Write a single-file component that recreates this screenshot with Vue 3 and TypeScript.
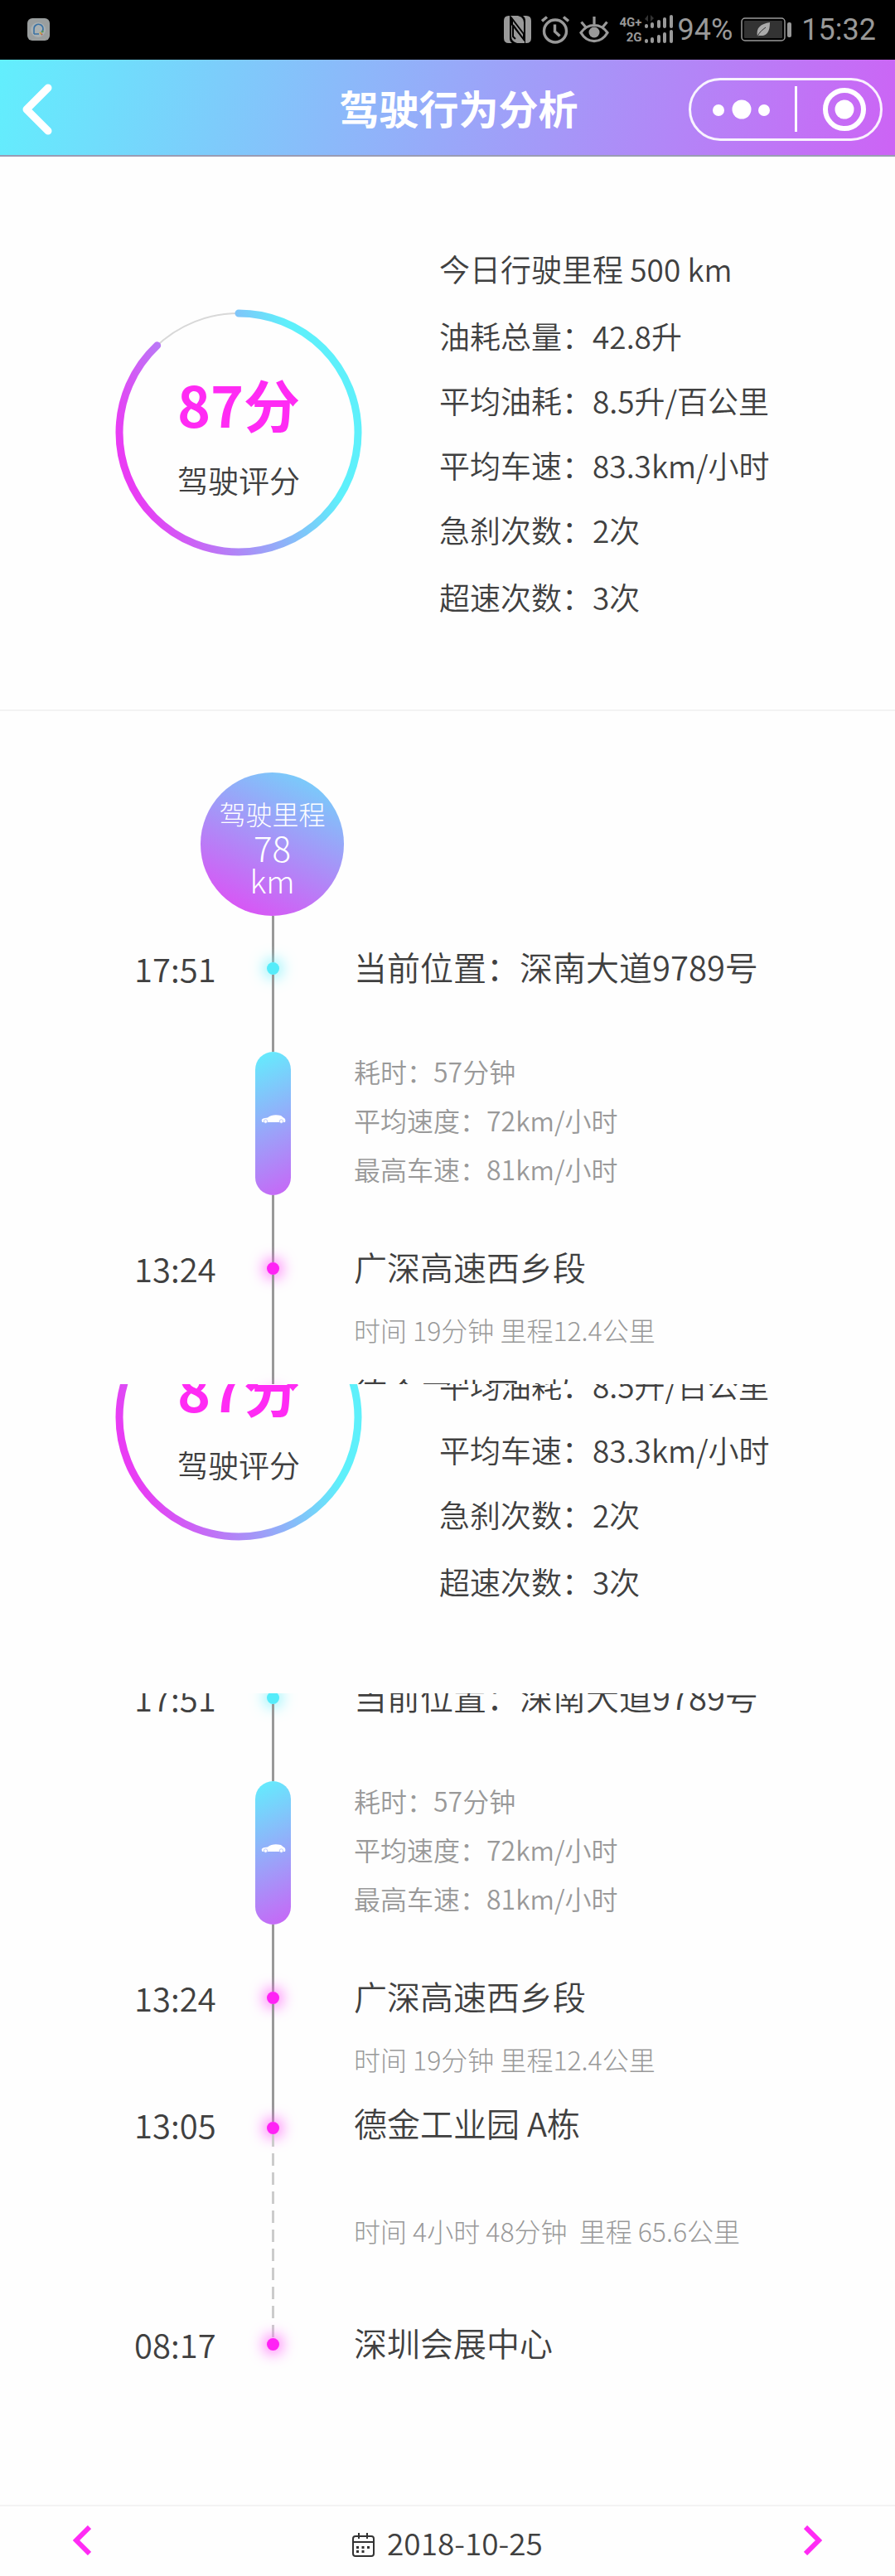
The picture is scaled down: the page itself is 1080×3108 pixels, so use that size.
<script setup lang="ts">
interface Frame {
  name: string
  overview: boolean
  timeline: boolean
}

interface Stop {
  kind: 'stop' | 'leg'
  time?: string
  place?: string
  note?: string
  details?: string[]
  modifiers: string[]
}

const frames: Frame[] = [
  { name: 'opening', overview: true, timeline: true },
  { name: 'summary', overview: true, timeline: false },
  { name: 'route', overview: false, timeline: true },
]

const stats: string[] = [
  '今日行驶里程 500 km',
  '油耗总量：42.8升',
  '平均油耗：8.5升/百公里',
  '平均车速：83.3km/小时',
  '急刹次数：2次',
  '超速次数：3次',
]

const stops: Stop[] = [
  { kind: 'stop', time: '17:51', place: '当前位置：深南大道9789号', modifiers: ['current'] },
  {
    kind: 'leg',
    details: ['耗时：57分钟', '平均速度：72km/小时', '最高车速：81km/小时'],
    modifiers: ['leg'],
  },
  { kind: 'stop', time: '13:24', place: '广深高速西乡段', note: '时间 19分钟 里程12.4公里', modifiers: ['passed'] },
  {
    kind: 'stop',
    time: '13:05',
    place: '德金工业园 A栋',
    note: '时间 4小时 48分钟\u00a0 里程 65.6公里',
    modifiers: ['parked'],
  },
  { kind: 'stop', time: '08:17', place: '深圳会展中心', modifiers: ['origin'] },
]

const score = 87
const radius = 144
const circumference = 2 * Math.PI * radius
// The round cap adds about one percent to the drawn arc
const arc = `${(circumference * (score + 1)) / 100} ${circumference}`
</script>

<template>
  <div class="page">
    <div class="status">
      <svg class="app-icon" width="28" height="28" viewBox="0 0 28 28" aria-hidden="true">
        <rect x="0" y="0" width="27" height="27" rx="6" fill="#9a9e9e" />
        <circle cx="13" cy="14" r="9" fill="#a9b0b2" />
        <path d="M8 19 V13 A5.5 5.5 0 1 1 17 17 M8 19 H14" fill="none" stroke="#3a72a4" stroke-width="1.6" />
        <path d="M15 17 l2 2" stroke="#c9a640" stroke-width="2" />
        <path d="M17 20 l1 -1" stroke="#b65b4e" stroke-width="2" />
        <path d="M18 15 l1 2" stroke="#5a9a58" stroke-width="2" />
      </svg>
      <div class="status-right">
        <svg width="33" height="34" viewBox="0 0 33 34" aria-hidden="true">
          <path d="M6 0 H7 V27 Q7 31 10 33 H6 Q0 33 0 27 V6 Q0 0 6 0 Z" fill="#999" />
          <path d="M27 33 H26 V6 Q26 2 23 0 H27 Q33 0 33 6 V27 Q33 33 27 33 Z" fill="#999" />
          <path d="M8 0 H17 Q24 2 24 8 V22 L8 2 Z" fill="#999" />
          <path d="M25 33 H16 Q9 31 9 25 V11 L25 31 Z" fill="#999" />
          <path d="M11 12 L23 27 V21 L11 6 Z" fill="#999" />
          <path d="M8 1 L24 22 M11 11 V25 L14 28 M11 11 L25 30" fill="none" stroke="#000" stroke-width="2" />
        </svg>
        <svg width="34" height="34" viewBox="0 0 34 34" fill="none" stroke="#999" stroke-width="3.4" aria-hidden="true">
          <circle cx="17" cy="18.500" r="13.500" />
          <path d="M16.500 10.500 V19 L22.500 24.500" />
          <path d="M1 6.500 L7 1.500 M33 6.500 L27 1.500" />
        </svg>
        <svg width="36" height="34" viewBox="0 0 36 34" fill="none" stroke="#999" stroke-width="3.2" aria-hidden="true">
          <path d="M2 20.500 C10 8.500 26 8.500 34 20.500 C26 34 10 34 2 20.500 Z" />
          <circle cx="18" cy="20" r="6.500" fill="#999" stroke="none" />
          <path d="M18 1 V10 M2.500 7.500 L8 14 M33.500 7.500 L28 14" />
        </svg>
        <div class="network">
          <span>4G+</span>
          <span>2G</span>
        </div>
        <svg class="bars" width="35" height="36" viewBox="0 0 35 36" aria-hidden="true">
          <path d="M0 5 L4 0 V8 M7 0 V8 L11 4" fill="#333" />
          <g fill="#999">
            <rect x="0" y="11" width="4" height="5" rx="2" />
            <rect x="7" y="9" width="4" height="7" rx="2" />
            <rect x="15" y="6" width="4" height="10" rx="2" />
            <rect x="22" y="3" width="4" height="13" rx="2" />
            <rect x="30" y="0" width="4" height="16" rx="2" />
            <rect x="0" y="29" width="4" height="5" rx="2" />
            <rect x="7" y="27" width="4" height="7" rx="2" />
            <rect x="15" y="24" width="4" height="10" rx="2" />
            <rect x="22" y="21" width="4" height="13" rx="2" />
            <rect x="30" y="18" width="4" height="16" rx="2" />
          </g>
        </svg>
        <span class="percent">94%</span>
        <svg class="battery" width="61" height="30" viewBox="0 0 61 30" aria-hidden="true">
          <rect x="1" y="1" width="52" height="27" rx="4" fill="none" stroke="#999" stroke-width="1.500" />
          <rect x="4" y="4" width="46" height="21" rx="1" fill="#333" />
          <rect x="56" y="6" width="5" height="18" rx="2" fill="#999" />
          <path d="M20 23 C18 12 24 8 35 6 C35 18 31 23 22 22 Z" fill="#aaa" />
          <path d="M20 23 C22 18 26 15 30 12" fill="none" stroke="#333" stroke-width="1" />
        </svg>
        <span class="clock">15:32</span>
      </div>
    </div>

    <header class="header">
      <button class="back" type="button" aria-label="返回">
        <svg width="36" height="62" viewBox="0 0 36 62" aria-hidden="true">
          <path d="M31 5 L5 31 L31 57" fill="none" stroke="#fff" stroke-width="9" stroke-linecap="round" stroke-linejoin="round" />
        </svg>
      </button>
      <h1>驾驶行为分析</h1>
      <div class="capsule">
        <button class="more" type="button" aria-label="更多">
          <svg width="70" height="24" viewBox="0 0 70 24" fill="#fff" aria-hidden="true">
            <circle cx="7" cy="13" r="7" />
            <circle cx="35" cy="12" r="11.500" />
            <circle cx="62" cy="13" r="7" />
          </svg>
        </button>
        <button class="close" type="button" aria-label="关闭">
          <svg width="52" height="52" viewBox="0 0 52 52" aria-hidden="true">
            <circle cx="26" cy="26" r="23" fill="none" stroke="#fff" stroke-width="6" />
            <circle cx="26" cy="26" r="11.500" fill="#fff" />
          </svg>
        </button>
      </div>
    </header>

    <main>
      <section v-for="frame in frames" :key="frame.name" class="frame" :class="frame.name">
        <div v-if="frame.overview" class="overview">
          <div class="ring">
            <svg width="300" height="300" viewBox="0 0 300 300" aria-hidden="true">
              <defs>
                <linearGradient :id="`arc-${frame.name}`" gradientUnits="userSpaceOnUse" x1="240" y1="120" x2="14" y2="188">
                  <stop offset="0" stop-color="#5ef0fb" />
                  <stop offset="1" stop-color="#e93cf4" />
                </linearGradient>
              </defs>
              <circle cx="150" cy="150" :r="radius" fill="none" stroke="#d8d8d8" stroke-width="2" />
              <path
                d="M150 6 A144 144 0 0 1 150 294 A144 144 0 0 1 150 6"
                fill="none"
                :stroke="`url(#arc-${frame.name})`"
                stroke-width="9"
                stroke-linecap="round"
                :stroke-dasharray="arc"
              />
            </svg>
            <div class="ring-text">
              <strong>{{ score }}分</strong>
              <span>驾驶评分</span>
            </div>
          </div>
          <ul class="stats">
            <li v-for="line in stats" :key="line">{{ line }}</li>
          </ul>
        </div>

        <div v-if="frame.timeline" class="timeline">
          <div class="mileage">
            <span class="mileage-label">驾驶里程</span>
            <span class="mileage-value">78</span>
            <span class="mileage-unit">km</span>
          </div>
          <div class="stem"></div>
          <ol>
            <li v-for="(stop, index) in stops" :key="index" :class="stop.modifiers">
              <time v-if="stop.time">{{ stop.time }}</time>
              <div class="axis">
                <i class="lead"></i>
                <i v-if="stop.kind === 'stop'" class="dot"></i>
                <span v-else class="pill">
                  <svg width="30" height="11" viewBox="0 0 30 11" aria-hidden="true">
                    <path
                      d="M1 8 C0 5 2 4 8 3.500 C12 0 18 -0.500 24 1 L27 3.500 C29 4.500 30 6 29 9 H1.500 Z"
                      fill="#fff"
                    />
                    <circle cx="5.500" cy="8" r="2.200" fill="#fff" stroke="#a5b6fa" stroke-width="0.700" />
                    <circle cx="24.500" cy="8" r="2.200" fill="#fff" stroke="#a5b6fa" stroke-width="0.700" />
                  </svg>
                </span>
                <i class="tail"></i>
              </div>
              <div class="body">
                <h2 v-if="stop.place">{{ stop.place }}</h2>
                <p v-for="detail in stop.details" :key="detail" class="detail">{{ detail }}</p>
                <p v-if="stop.note" class="note">{{ stop.note }}</p>
              </div>
            </li>
          </ol>
        </div>
      </section>
    </main>

    <footer class="footer">
      <button class="step" type="button" aria-label="前一天">
        <svg width="22" height="36" viewBox="0 0 22 36" aria-hidden="true">
          <path d="M20 2 L4 18 L20 34" fill="none" stroke="#ff2bf4" stroke-width="6" />
        </svg>
      </button>
      <button class="date" type="button">
        <svg width="27" height="30" viewBox="0 0 27 30" fill="none" stroke="#333" stroke-width="2" aria-hidden="true">
          <rect x="1" y="4" width="25" height="24" rx="3" />
          <path d="M1 11 H26 M8 0 V7 M18 0 V7" />
          <path d="M5 17.500 H8 M11.500 17.500 H14.500 M18 17.500 H21 M5 22.500 H8 M11.500 22.500 H14.500" stroke-width="3" />
        </svg>
        <span>2018-10-25</span>
      </button>
      <button class="step" type="button" aria-label="后一天">
        <svg width="22" height="36" viewBox="0 0 22 36" aria-hidden="true">
          <path d="M2 2 L18 18 L2 34" fill="none" stroke="#ff2bf4" stroke-width="6" />
        </svg>
      </button>
    </footer>
  </div>
</template>

<style>
body {
  background: #fefefe;
}
</style>

<style scoped>
.page {
  font-family: 'Noto Sans CJK SC', sans-serif;
  font-weight: 350;
  color: #404040;
}

button {
  padding: 0;
  border: 0;
  background: none;
  color: inherit;
  font: inherit;
}

svg {
  display: block;
}

ul,
ol {
  margin: 0;
  padding: 0;
  list-style: none;
}

/* Phone status bar */
.status {
  display: flex;
  align-items: center;
  justify-content: space-between;
  height: 72px;
  padding: 0 23px 0 33px;
  background: #000;
  color: #999;
}

.status-right {
  display: flex;
  align-items: center;
  gap: 12px;
  font: 36px/72px Roboto, sans-serif;
}

.network {
  display: flex;
  flex-direction: column;
  align-items: flex-end;
  font: bold 15px/18px Roboto, sans-serif;
}

.bars {
  margin-left: -9px;
}

.percent {
  margin-left: -7px;
}

.battery {
  margin-left: -2px;
}

/* Title bar */
.header {
  display: grid;
  grid-template-columns: 1fr auto 1fr;
  align-items: center;
  box-sizing: border-box;
  height: 117px;
  padding: 4px 0 0 27px;
  border-bottom: 2px solid #9a9cb4;
  background: linear-gradient(105deg, #62effd, #cd63f5);
  color: #fff;
}

.back {
  justify-self: start;
}

h1 {
  margin: 0 0 6px;
  font-size: 48px;
  line-height: 60px;
  font-weight: 700;
}

.capsule {
  display: flex;
  align-items: center;
  justify-self: end;
  box-sizing: border-box;
  width: 234px;
  height: 76px;
  margin-right: 15px;
  border: 3px solid rgba(255, 255, 255, 0.9);
  border-radius: 38px;
}

.more,
.close {
  display: flex;
  align-items: center;
  height: 55px;
}

.more {
  padding: 0 29px 0 26px;
  border-right: 3px solid #fff;
}

.close {
  padding-left: 31px;
}

/* Scrolled views of the report */
.frame {
  overflow: hidden;
}

.opening {
  height: 1481px;
}

.summary {
  height: 373px;
}

.summary .overview {
  margin-top: -293px;
}

.route .timeline {
  margin-top: -305px;
}

.overview {
  display: flex;
  gap: 92px;
  padding: 96px 0 97px 138px;
  border-bottom: 2px solid #f3f3f3;
}

.ring {
  display: grid;
  align-items: start;
  width: 300px;
  padding-top: 87px;
}

.ring > * {
  grid-area: 1 / 1;
}

.ring-text {
  display: flex;
  flex-direction: column;
  align-items: center;
  padding-top: 65px;
}

.ring-text strong {
  color: #ff2bf4;
  font-size: 68px;
  line-height: 100px;
}

.ring-text span {
  font-size: 37px;
  line-height: 84px;
}

.stats {
  font-size: 37px;
  line-height: 78px;
}

.stats li:first-child {
  margin-bottom: 3px;
}

.stats li:last-child {
  margin-top: 3px;
}

/* Trip timeline */
.timeline {
  padding: 74px 0 164px;
}

.mileage {
  display: flex;
  flex-direction: column;
  align-items: center;
  box-sizing: border-box;
  width: 173px;
  height: 173px;
  margin-left: 242px;
  padding-top: 28px;
  border-radius: 50%;
  background: linear-gradient(205deg, #6cdcfb, #e645f4);
  color: #fff;
  font-weight: 300;
}

.mileage-label {
  font-size: 32px;
  line-height: 42px;
}

.mileage-value {
  font-size: 42px;
  line-height: 40px;
}

.mileage-unit {
  font-size: 38px;
  line-height: 40px;
}

.stem {
  width: 3px;
  height: 31px;
  margin-left: 328px;
  background: #999;
}

.timeline li {
  display: grid;
  grid-template-columns: 146px 43px 1fr;
  padding-left: 162px;
}

.current {
  min-height: 127px;
}

.leg {
  min-height: 235px;
}

.passed {
  min-height: 153px;
}

.parked {
  min-height: 265px;
}

time {
  padding-top: 2px;
  font-size: 40px;
  line-height: 60px;
}

.axis {
  grid-column: 2;
  display: flex;
  flex-direction: column;
  align-items: center;
}

.lead,
.tail {
  width: 3px;
  background: #999;
}

.lead {
  height: 25px;
}

.leg .lead {
  height: 6px;
}

.parked .lead {
  height: 29px;
}

.origin .lead,
.origin .tail {
  background: none;
}

.tail {
  flex: 1;
}

.parked .tail {
  margin-bottom: -24px;
  background: repeating-linear-gradient(#ccc 0 15px, transparent 15px 23px);
}

.dot {
  width: 15px;
  height: 15px;
  border-radius: 50%;
  background: #ff22f5;
  box-shadow: 0 0 18px 3px #ff5cf8;
}

.current .dot {
  background: #55ecfa;
  box-shadow: 0 0 18px 3px #7cf2fc;
}

.pill {
  display: flex;
  align-items: center;
  justify-content: center;
  box-sizing: border-box;
  width: 43px;
  height: 173px;
  padding-bottom: 10px;
  border-radius: 22px;
  background: linear-gradient(155deg, #62effd, #c964f6);
}

.body {
  grid-column: 3;
  padding-left: 76px;
}

h2,
p {
  margin: 0;
  font-weight: inherit;
}

h2 {
  font-size: 40px;
  line-height: 60px;
}

.detail {
  color: #999;
  font-size: 32px;
  line-height: 59px;
}

.note {
  padding-top: 22px;
  color: #999;
  font-size: 32px;
  font-weight: 300;
  line-height: 48px;
}

.parked .note {
  padding-top: 76px;
}

/* Date switcher */
.footer {
  display: flex;
  align-items: center;
  justify-content: space-between;
  box-sizing: border-box;
  height: 88px;
  padding: 0 88px;
  border-top: 2px solid #f3f3f3;
}

.step {
  margin-bottom: 4px;
}

.date {
  display: flex;
  align-items: center;
  gap: 15px;
  font-size: 37px;
  line-height: 54px;
}

.date svg {
  margin-top: 8px;
}
</style>
